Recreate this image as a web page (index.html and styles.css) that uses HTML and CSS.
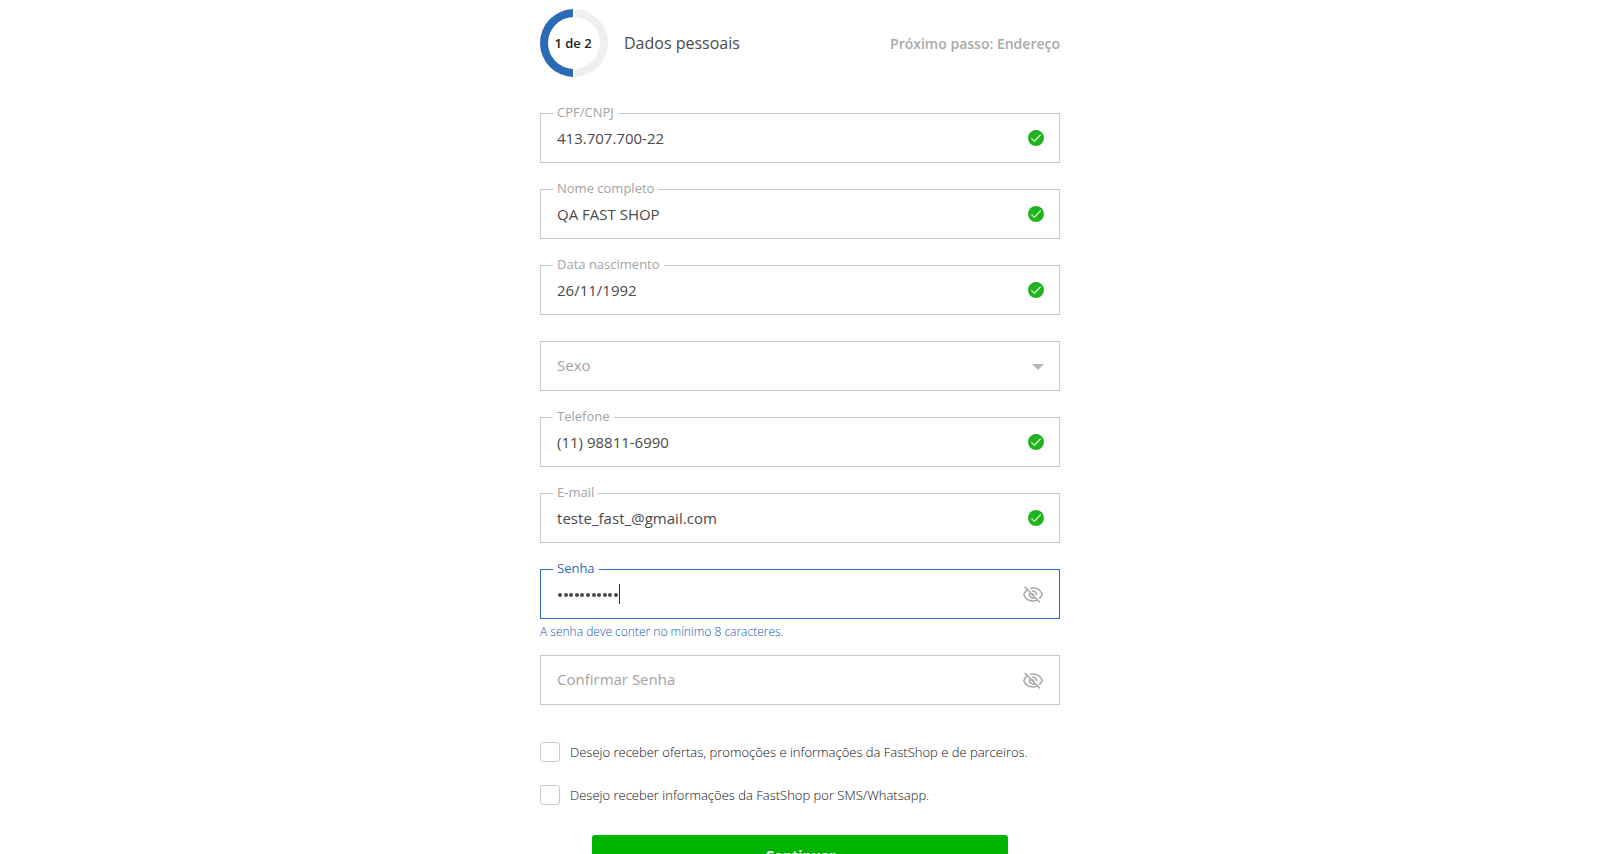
FILE: index.html
```html
<!DOCTYPE html>
<html lang="pt-BR">
<head>
<meta charset="utf-8">
<title>Dados pessoais</title>
<link rel="stylesheet" href="styles.css">
</head>
<body>
<svg class="defs" width="0" height="0" aria-hidden="true">
  <symbol id="check" viewBox="0 0 16 16"><circle cx="8" cy="8" r="8" fill="#1eb41e"/><path d="M3.5 8.5 6.4 11.3 12.6 4.7" fill="none" stroke="#fff" stroke-width="1.1"/></symbol>
  <symbol id="eye-off" viewBox="0 0 20 18"><g fill="none" stroke="#a9a9a9" stroke-width="1.6"><path d="M5 3.4C3 4.5 1.5 6.5.8 8.5 2.2 12.5 5.8 15 10 15c1.6 0 3.1-.4 4.4-1M7.2 2.4C8.1 2.1 9 2 10 2c4.2 0 7.8 2.5 9.2 6.5-.6 1.6-1.6 3-2.9 4.1"/><path d="M7 7a3.5 3.5 0 0 0 4.7 4.7M9.3 5.1a3.5 3.5 0 0 1 4.1 4.1"/><path d="M1.7.8 17 16.5"/></g><circle cx="10" cy="8.5" r="1.2" fill="#a9a9a9"/></symbol>
</svg>
<main class="form">
  <header class="steps">
    <div class="ring">
      <svg class="ring-arc" viewBox="0 0 68 68"><path d="M33 .015A34 34 0 0 0 33 67.985V59.98A26 26 0 0 1 33 8.02Z" fill="#296cb5"/><path d="M35 .015A34 34 0 0 1 35 67.985V59.98A26 26 0 0 0 35 8.02Z" fill="#efefef"/></svg>
      <span class="ring-text">1 de 2</span>
    </div>
    <h1 class="title">Dados pessoais</h1>
    <span class="next">Próximo passo: Endereço</span>
  </header>
  <div class="field"><label class="label">CPF/CNPJ</label><span class="value">413.707.700-22</span><svg class="check"><use href="#check"/></svg></div>
  <div class="field"><label class="label">Nome completo</label><span class="value">QA FAST SHOP</span><svg class="check"><use href="#check"/></svg></div>
  <div class="field"><label class="label">Data nascimento</label><span class="value">26/11/1992</span><svg class="check"><use href="#check"/></svg></div>
  <div class="field"><span class="value placeholder">Sexo</span><svg class="caret" viewBox="0 0 12 6"><path d="M0 0H12L6 6Z" fill="#b5b5b5"/></svg></div>
  <div class="field"><label class="label">Telefone</label><span class="value">(11) 98811-6990</span><svg class="check"><use href="#check"/></svg></div>
  <div class="field"><label class="label">E-mail</label><span class="value email">teste_fast_@gmail.com</span><svg class="check"><use href="#check"/></svg></div>
  <div class="field focused"><label class="label">Senha</label><span class="value dots"><i></i><i></i><i></i><i></i><i></i><i></i><i></i><i></i><i></i><i></i><i></i><b class="cursor"></b></span><svg class="eye"><use href="#eye-off"/></svg></div>
  <p class="hint">A senha deve conter no mínimo 8 caracteres.</p>
  <div class="field"><span class="value placeholder">Confirmar Senha</span><svg class="eye"><use href="#eye-off"/></svg></div>
  <div class="options">
    <label class="option"><span class="box"></span><span class="option-text">Desejo receber ofertas, promoções e informações da FastShop e de parceiros.</span></label>
    <label class="option"><span class="box"></span><span class="option-text">Desejo receber informações da FastShop por SMS/Whatsapp.</span></label>
  </div>
  <button class="submit">Continuar</button>
</main>
</body>
</html>
```
FILE: styles.css
```css
* { box-sizing: border-box; }
html, body { height: 100%; overflow: hidden; }
body { margin: 0; background: #fff; font-family: "Open Sans", "Noto Sans", sans-serif; color: #4a4a4a; }
.defs { position: absolute; }
.form { width: 520px; margin: 0 auto; padding-top: 9px; display: flex; flex-direction: column; }
.steps { display: flex; align-items: center; height: 68px; margin-bottom: 36px; }
.ring { display: grid; width: 68px; height: 68px; place-items: center; }
.ring-arc, .ring-text { grid-area: 1 / 1; }
.ring-arc { width: 68px; height: 68px; }
.ring-text { margin-right: 2px; font-size: 13px; font-weight: 600; color: #222; line-height: 18px; }
.title { margin: 0 0 0 16px; font-size: 16px; font-weight: 400; }
.next { margin-left: auto; font-size: 14px; font-weight: 600; color: #a9a9a9; }
.field { position: relative; display: flex; align-items: center; justify-content: space-between; height: 50px; flex: none; padding: 0 15px 0 16px; border: 1px solid #c8c8c8; margin-bottom: 26px; }
.label { position: absolute; left: 12px; top: -11px; padding: 0 4px; background: #fff; font-size: 13px; line-height: 18px; color: #a3a3a3; }
.value { font-size: 15px; line-height: 20px; }
.email { letter-spacing: .04px; }
.placeholder { color: #a3a3a3; margin-bottom: 2px; }
.check { width: 16px; height: 16px; }
.caret { width: 12px; height: 6px; margin-top: 2px; }
.eye { width: 20px; height: 18px; margin: 2px 1px 0 0; }
.focused { border-color: #296cb5; margin-bottom: 4px; }
.focused .label { color: #296cb5; }
.dots { display: flex; align-items: center; gap: 1.6px; padding-left: 1px; }
.dots i { width: 4px; height: 4px; border-radius: 50%; background: #4a4a4a; margin-top: 1px; }
.cursor { width: 1px; height: 20px; background: #333; margin-left: -1px; }
.hint { margin: 0 0 14px; font-size: 12px; line-height: 18px; font-weight: 300; color: #1459b8; }
.options { display: flex; flex-direction: column; gap: 23px; margin-top: 11px; }
.option { display: flex; align-items: center; height: 20px; gap: 10px; }
.box { width: 20px; height: 20px; border: 1px solid #c8c8c8; border-radius: 3px; }
.option-text { font-size: 13px; font-weight: 300; color: #111; }
.submit { width: 416px; height: 40px; flex: none; margin: 30px auto 0; padding: 2px 0 0 1px; border: 0; border-radius: 3px; background: #00b400; color: #fff; font: 700 14px/20px "Open Sans", sans-serif; }
```
